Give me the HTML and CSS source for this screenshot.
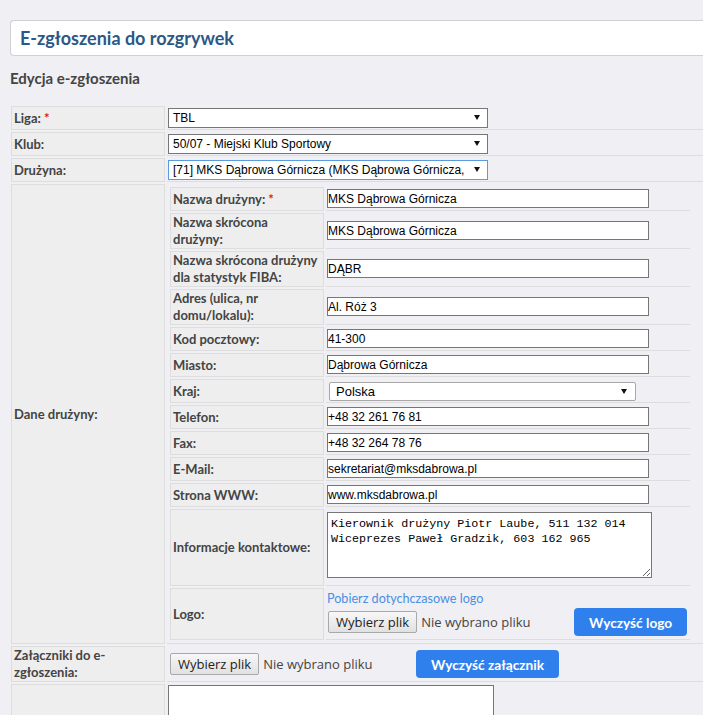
FILE: index.html
```html
<!DOCTYPE html>
<html lang="pl">
<head>
<meta charset="utf-8">
<title>E-zgłoszenia do rozgrywek</title>
<link rel="stylesheet" href="styles.css">
</head>
<body>
<div class="page">
  <div class="header"><h1 class="title">E-zgłoszenia do rozgrywek</h1></div>
  <h2 class="subtitle">Edycja e-zgłoszenia</h2>

  <div class="form outer">
    <div class="lbl">Liga:<span class="req">*</span></div>
    <div class="val">
      <div class="select wide"><span class="sel-text">TBL</span><svg class="arrow" width="6" height="5" viewBox="0 0 6 5"><polygon points="0,0 6,0 3,5"/></svg></div>
    </div>

    <div class="lbl">Klub:</div>
    <div class="val">
      <div class="select wide"><span class="sel-text">50/07 - Miejski Klub Sportowy</span><svg class="arrow" width="6" height="5" viewBox="0 0 6 5"><polygon points="0,0 6,0 3,5"/></svg></div>
    </div>

    <div class="lbl">Drużyna:</div>
    <div class="val">
      <div class="select wide focused"><span class="sel-text">[71] MKS Dąbrowa Górnicza (MKS Dąbrowa Górnicza,</span><svg class="arrow" width="6" height="5" viewBox="0 0 6 5"><polygon points="0,0 6,0 3,5"/></svg></div>
    </div>

    <div class="lbl">Dane drużyny:</div>
    <div class="val nested">
      <div class="form inner">
        <div class="lbl">Nazwa drużyny:<span class="req">*</span></div>
        <div class="val"><input class="inp" type="text" value="MKS Dąbrowa Górnicza"></div>

        <div class="lbl">Nazwa skrócona drużyny:</div>
        <div class="val"><input class="inp" type="text" value="MKS Dąbrowa Górnicza"></div>

        <div class="lbl">Nazwa skrócona drużyny dla statystyk FIBA:</div>
        <div class="val"><input class="inp" type="text" value="DĄBR"></div>

        <div class="lbl">Adres (ulica, nr domu/lokalu):</div>
        <div class="val"><input class="inp" type="text" value="Al. Róż 3"></div>

        <div class="lbl">Kod pocztowy:</div>
        <div class="val"><input class="inp" type="text" value="41-300"></div>

        <div class="lbl">Miasto:</div>
        <div class="val"><input class="inp" type="text" value="Dąbrowa Górnicza"></div>

        <div class="lbl">Kraj:</div>
        <div class="val">
          <div class="select country"><span class="sel-text">Polska</span><svg class="arrow" width="6" height="5" viewBox="0 0 6 5"><polygon points="0,0 6,0 3,5"/></svg></div>
        </div>

        <div class="lbl">Telefon:</div>
        <div class="val"><input class="inp" type="text" value="+48 32 261 76 81"></div>

        <div class="lbl">Fax:</div>
        <div class="val"><input class="inp" type="text" value="+48 32 264 78 76"></div>

        <div class="lbl">E-Mail:</div>
        <div class="val"><input class="inp" type="text" value="sekretariat@mksdabrowa.pl"></div>

        <div class="lbl">Strona WWW:</div>
        <div class="val"><input class="inp" type="text" value="www.mksdabrowa.pl"></div>

        <div class="lbl">Informacje kontaktowe:</div>
        <div class="val"><textarea class="contact">Kierownik drużyny Piotr Laube, 511 132 014
Wiceprezes Paweł Gradzik, 603 162 965</textarea></div>

        <div class="lbl">Logo:</div>
        <div class="val logo">
          <a class="link" href="#">Pobierz dotychczasowe logo</a>
          <div class="filerow">
            <div class="file"><span class="file-btn">Wybierz plik</span><span class="file-name">Nie wybrano pliku</span></div>
            <button class="btn" type="button">Wyczyść logo</button>
          </div>
        </div>
      </div>
    </div>

    <div class="lbl">Załączniki do e-zgłoszenia:</div>
    <div class="val">
      <div class="filerow">
        <div class="file att"><span class="file-btn">Wybierz plik</span><span class="file-name">Nie wybrano pliku</span></div>
        <button class="btn" type="button">Wyczyść załącznik</button>
      </div>
    </div>

    <div class="lbl tall"></div>
    <div class="val top"><textarea class="notes"></textarea></div>
  </div>
</div>
</body>
</html>
```

FILE: styles.css
```css
html, body {
  margin: 0;
  padding: 0;
  background: #f0eff4;
  overflow: hidden;
}

.page {
  width: 740px;
  padding: 20px 0 0 10px;
  font-family: Lato, "Open Sans", sans-serif;
  color: #464646;
}

.header {
  height: 36px;
  box-sizing: border-box;
  background: #fff;
  border: 1px solid #cfcfd4;
  border-right: none;
  border-radius: 4px 0 0 4px;
}

.title {
  margin: 0;
  padding-left: 9px;
  font-size: 18px;
  line-height: 34px;
  font-weight: 700;
  color: #2c5885;
}

.subtitle {
  margin: 12px 0 0;
  font-size: 15px;
  line-height: 20px;
  font-weight: 700;
  color: #444;
}

.form {
  display: grid;
  grid-template-columns: 154px 1fr;
  column-gap: 2px;
  row-gap: 2px;
}

.outer {
  margin: 18px 0 0 1px;
}

.inner {
  grid-template-columns: 154px 364px;
  padding: 3px 0 3px 3px;
}

.lbl {
  display: flex;
  align-items: center;
  box-sizing: border-box;
  min-height: 24px;
  padding: 0 4px 0 2px;
  background: #eeeeee;
  border: 1px solid #dddddd;
  font-size: 13px;
  line-height: 17px;
  font-weight: 700;
  color: #444;
}

.lbl.tall {
  min-height: 40px;
}

.req {
  color: #d42020;
  margin-left: 3px;
}

.val {
  display: flex;
  align-items: center;
  padding: 0 0 0 1px;
  border-bottom: 1px solid #dddddd;
}

.val.nested {
  padding: 0;
  align-items: stretch;
}

.val.top {
  align-items: flex-start;
  border-bottom: none;
}

.select {
  display: flex;
  align-items: center;
  box-sizing: border-box;
  height: 20px;
  background: #fff;
  border: 1px solid #767676;
  font-family: "Liberation Sans", Arial, sans-serif;
  font-size: 12px;
  color: #000;
}

.select.wide {
  width: 320px;
  padding: 0 7px 0 4px;
}

.select.focused {
  border-color: #5a9be0;
}

.select.country {
  width: 307px;
  height: 19px;
  margin: 1px 0 0 2px;
  padding: 0 8px 0 6px;
  border-color: #a8a8a8;
  border-radius: 2px;
  font-size: 13px;
}

.sel-text {
  flex: 1;
  overflow: hidden;
  white-space: nowrap;
}

.arrow {
  flex: none;
  margin-left: 6px;
  fill: #111;
}

.inp {
  box-sizing: border-box;
  width: 322px;
  height: 19px;
  margin: 0;
  padding: 0;
  border: 1px solid #767676;
  border-radius: 0;
  background: #fff;
  font-family: "Liberation Sans", Arial, sans-serif;
  font-size: 12px;
  color: #000;
  outline: none;
}

.contact {
  display: block;
  box-sizing: border-box;
  width: 325px;
  height: 66px;
  margin: 3px 0 7px;
  padding: 4px 3px 2px;
  border: 1px solid #767676;
  border-radius: 0;
  font-family: "Liberation Mono", "Courier New", monospace;
  font-size: 11.7px;
  line-height: 15px;
  color: #000;
  background: #fff;
}

.val.logo {
  flex-direction: column;
  align-items: flex-start;
  padding: 2px 0 3px 1px;
}

.link {
  font-size: 12.6px;
  line-height: 17px;
  color: #4a90e2;
  text-decoration: none;
}

.filerow {
  display: flex;
  align-items: center;
  margin-top: 1px;
}

.file {
  display: flex;
  align-items: center;
  width: 240px;
  margin-left: 1px;
}

.file.att {
  margin-left: 2px;
}

.file-btn {
  box-sizing: border-box;
  height: 22px;
  padding: 0 7px;
  line-height: 20px;
  border: 1px solid #a9a9a9;
  border-radius: 2px;
  background: linear-gradient(#f7f7f7, #e1e1e1);
  font-family: "Open Sans", sans-serif;
  font-size: 13px;
  color: #222;
  white-space: nowrap;
}

.file-name {
  margin-left: 4px;
  font-family: "Open Sans", sans-serif;
  font-size: 13px;
  color: #444;
  white-space: nowrap;
}

.btn {
  height: 28px;
  margin-left: 6px;
  padding: 0 15px;
  border: none;
  border-radius: 4px;
  background: #2f80ed;
  color: #fff;
  font-family: Lato, sans-serif;
  font-weight: 700;
  font-size: 13.7px;
  cursor: pointer;
}

.notes {
  display: block;
  box-sizing: border-box;
  width: 326px;
  height: 60px;
  margin: 1px 0 0 0;
  border: 1px solid #767676;
  border-radius: 0;
  background: #fff;
}
```
